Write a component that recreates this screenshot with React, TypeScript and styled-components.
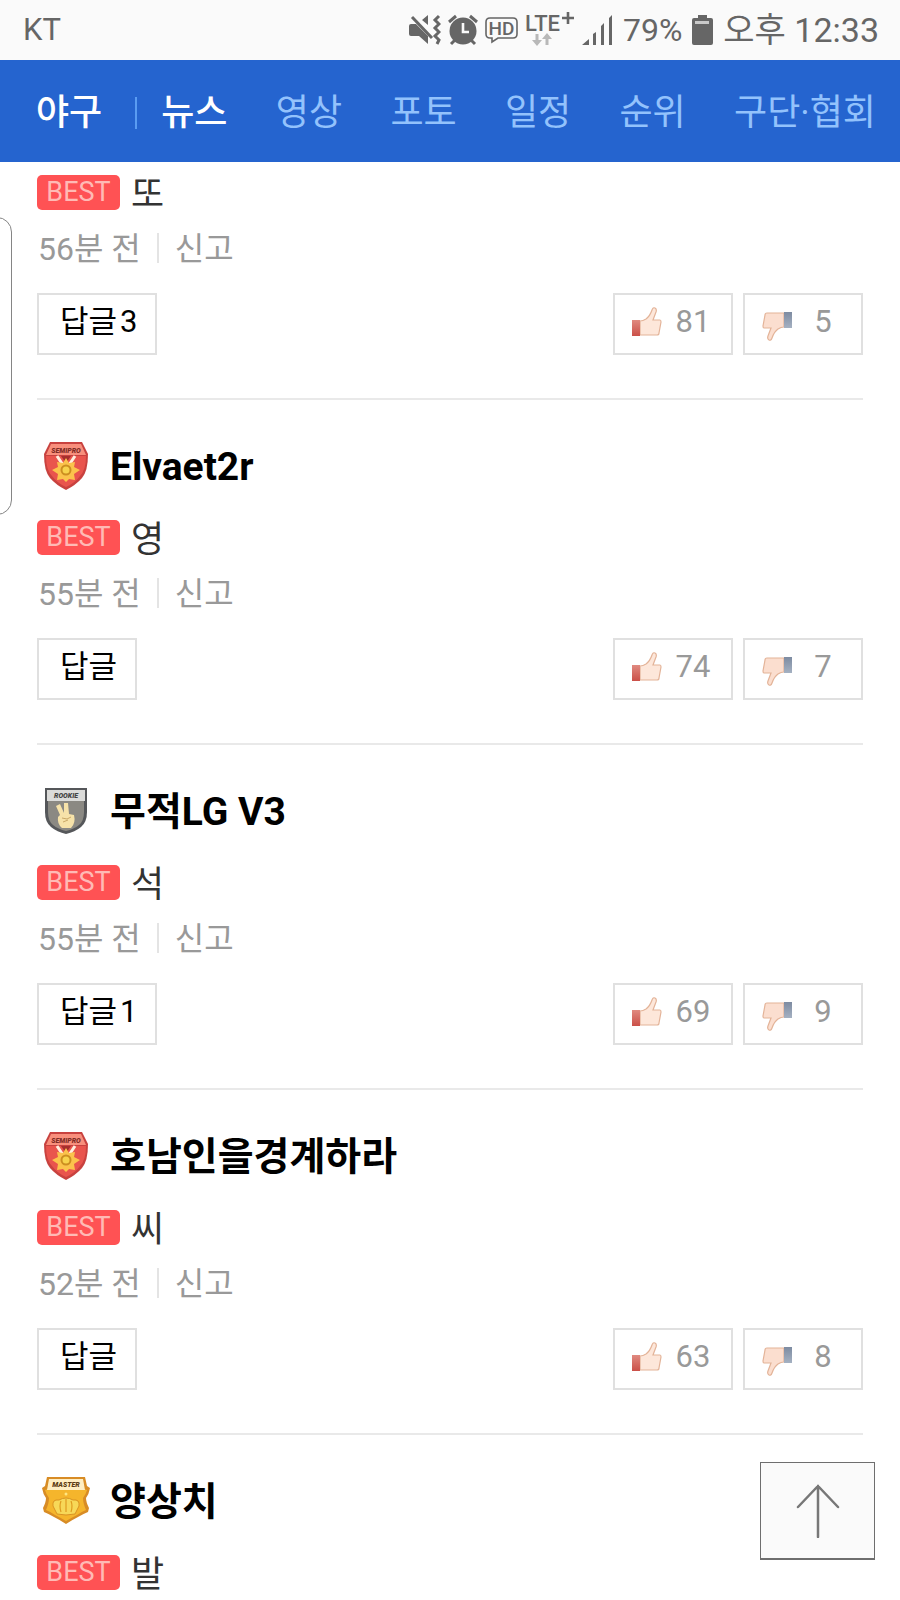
import React from "react";
import styled, { createGlobalStyle } from "styled-components";

const GlobalStyle = createGlobalStyle`
  *, *::before, *::after { box-sizing: border-box; }
  body {
    margin: 0;
    background: #fff;
    color: #333;
    font-family: Roboto, "Noto Sans CJK KR", sans-serif;
  }
  button { font: inherit; cursor: pointer; }
  a { color: inherit; text-decoration: none; }
  svg { display: block; flex: none; }
`;

const Page = styled.div`
  position: relative;
  min-height: 100vh;
  overflow: hidden;
`;

const StatusBar = styled.header`
  display: flex;
  align-items: center;
  gap: 10px;
  height: 60px;
  padding: 0 21px 0 23px;
  background: #fafafa;
  color: #666;
  font-size: 34px;
  line-height: 40px;
  white-space: nowrap;
`;

const Carrier = styled.span`
  flex: 1;
  font-size: 31px;
`;

const BatteryLevel = styled.span`
  font-size: 32px;
`;

const StatusIcons = styled.div`
  display: flex;
  align-items: center;
  gap: 7px;
`;

const Nav = styled.nav`
  display: flex;
  align-items: center;
  height: 102px;
  padding: 4px 24px 0 36px;
  background: #2564cf;
  font-size: 36px;
  line-height: 44px;
  white-space: nowrap;
`;

const Section = styled.a`
  color: #fff;
  font-weight: 500;
`;

const NavRule = styled.span`
  width: 2px;
  height: 32px;
  margin: 0 24px 0 33px;
  background: #5a9cf2;
`;

const Menu = styled.div`
  display: flex;
  flex: 1;
  justify-content: space-between;
`;

const MenuLink = styled.a<{ $active?: boolean }>`
  color: ${(p) => (p.$active ? "#fff" : "#93c2fc")};
  font-weight: ${(p) => (p.$active ? 500 : 400)};
`;

const List = styled.main`
  padding: 0 37px 0 37px;
`;

const Comment = styled.article<{ $cut?: boolean }>`
  padding: ${(p) => (p.$cut ? 13 : 42)}px 0 43px;
  border-bottom: 2px solid #e9e9e9;
  &:last-child {
    padding-bottom: 0;
    border-bottom: 0;
  }
`;

const Head = styled.div`
  display: flex;
  align-items: center;
  gap: 20px;
  height: 48px;
  margin-bottom: 30px;
  padding-left: 5px;
`;

const Name = styled.h2`
  margin: 0;
  padding-top: 2px;
  color: #000;
  font-size: 39px;
  font-weight: 700;
  line-height: 48px;
`;

const Body = styled.p`
  display: flex;
  align-items: flex-start;
  gap: 11px;
  height: 36px;
  margin: 0;
  font-size: 36px;
  line-height: 40px;
`;

const Best = styled.span`
  width: 83px;
  border-radius: 5px;
  background: #ff5254;
  color: #ffbab5;
  font-size: 27px;
  font-weight: 400;
  line-height: 35px;
  text-align: center;
`;

const Meta = styled.div`
  display: flex;
  align-items: center;
  gap: 16px;
  height: 32px;
  margin: 21px 0 29px;
  padding-left: 1px;
  color: #999;
  font-size: 32px;
  line-height: 32px;
`;

const MetaText = styled.time`
  padding-top: 2px;
`;

const MetaRule = styled.span`
  width: 2px;
  height: 30px;
  background: #e4e4e4;
`;

const Report = styled.button`
  padding: 2px 0 0;
  border: 0;
  background: none;
  color: inherit;
`;

const Actions = styled.div`
  display: flex;
  gap: 10px;
`;

const OutlineButton = styled.button`
  height: 62px;
  border: 2px solid #e0e0e0;
  background: #fff;
  font-size: 31px;
  line-height: 40px;
`;

const Reply = styled(OutlineButton)`
  display: flex;
  align-items: center;
  gap: 3px;
  margin-right: auto;
  padding: 0 18px 4px 21px;
  color: #000;
`;

const Vote = styled(OutlineButton)`
  display: flex;
  align-items: center;
  width: 120px;
  padding: 0 7px 0 17px;
  color: #999;
`;

const Count = styled.span`
  flex: 1;
  padding-bottom: 4px;
  text-align: center;
`;

const EdgeHandle = styled.div`
  position: absolute;
  top: 217px;
  left: -20px;
  width: 32px;
  height: 298px;
  border: 1px solid #858585;
  border-radius: 15px;
  background: #fff;
`;

const TopButton = styled.button`
  position: fixed;
  right: 25px;
  bottom: 40px;
  display: flex;
  align-items: center;
  justify-content: center;
  width: 115px;
  height: 98px;
  padding: 0;
  border: 1px solid #6e6e6e;
  border-bottom-width: 2px;
  background: #fafafa;
`;

const MuteIcon = () => (
  <svg width="32" height="32" viewBox="0 0 32 32" aria-label="음소거">
    <path d="M2 10h5l12 12v8l-9-8H2q-2 0-2-2v-8q0-2 2-2Z M13 6l6-5v10Z" fill="#666" />
    <path d="M3 3 23 24" stroke="#666" strokeWidth="3" />
    <path d="m30 2-4 4 4 4-4 4 4 4-4 4 4 4-2 4" fill="none" stroke="#666" strokeWidth="3" />
  </svg>
);

const AlarmIcon = () => (
  <svg width="30" height="32" viewBox="0 0 30 32" aria-label="알람">
    <circle cx="15" cy="17" r="13.5" fill="#666" />
    <path d="m1 8 7-6M29 8l-7-6M7 26l-4 4M23 26l4 4" stroke="#666" strokeWidth="3" />
    <path d="M15 9v9h6" fill="none" stroke="#fafafa" strokeWidth="2.6" />
  </svg>
);

const HdIcon = () => (
  <svg width="33" height="32" viewBox="0 0 33 32" aria-label="HD">
    <path
      d="M5 4h23q4 0 4 4v12q0 4-4 4H13l-6 4v-4H5q-4 0-4-4V8q0-4 4-4Z"
      fill="none"
      stroke="#666"
      strokeWidth="1.6"
    />
    <text x="16.5" y="21" textAnchor="middle" fontFamily="Roboto" fontSize="19" fontWeight="500" fill="#666">
      HD
    </text>
  </svg>
);

const LteIcon = () => (
  <svg width="50" height="36" viewBox="0 0 50 36" aria-label="LTE+">
    <text x="0" y="19" fontFamily="Roboto" fontSize="22" fontWeight="500" fill="#666">
      LTE
    </text>
    <path d="M43 0v12M37 6h12" stroke="#666" strokeWidth="2.6" />
    <path d="M12 22v7M22 33v-7" stroke="#b8b8b8" strokeWidth="3" />
    <path d="M7 28h10l-5 6ZM17 27h10l-5-6Z" fill="#b8b8b8" />
  </svg>
);

const SignalIcon = () => (
  <svg width="31" height="32" viewBox="0 0 31 32" aria-label="신호 세기">
    <path d="M0 31l7-6v6ZM11 20l3-2v13h-3ZM19 12l3-3v22h-3ZM27 4l3-3v30h-3Z" fill="#666" />
  </svg>
);

const BatteryIcon = () => (
  <svg width="21" height="32" viewBox="0 0 21 32" aria-label="배터리">
    <path d="M6 1h9v3h4q2 0 2 2v23q0 2-2 2H2q-2 0-2-2V6q0-2 2-2h4Z" fill="#666" />
    <path d="M3 7h14v3H3Z" fill="#c9c9c9" />
  </svg>
);

type Tier = "semipro" | "rookie" | "master";

const TierLabel = ({ y, color, children }: { y: number; color: string; children: string }) => (
  <text
    x="24"
    y={y}
    textAnchor="middle"
    fontFamily="Roboto"
    fontSize="7"
    fontWeight="900"
    fontStyle="italic"
    fill={color}
  >
    {children}
  </text>
);

const TierBadge = ({ tier }: { tier: Tier }) => {
  if (tier === "rookie") {
    return (
      <svg width="48" height="48" viewBox="0 0 48 48" aria-label="ROOKIE">
        <path d="M3 1h42v24q0 10-6 15-6 5-15 7-9-2-15-7-6-5-6-15Z" fill="#55575a" />
        <path d="M6 13h36v12q0 9-5 13-5 4-13 6-8-2-13-6-5-4-5-13Z" fill="#8b8983" />
        <path d="M5 3h38v11H5Z" fill="#dbdbd9" />
        <TierLabel y={11} color="#444">ROOKIE</TierLabel>
        <path
          d="m14 19 4-2 4 9V16h4l1 11 5 1q2 8-3 13h-9q-5-4-4-11l2-2Z"
          fill="#f6e2a9"
        />
        <path d="m20 31 5 1 4-2M21 35l5-2" fill="none" stroke="#c9a868" strokeWidth="1" />
      </svg>
    );
  }
  if (tier === "master") {
    return (
      <svg width="48" height="48" viewBox="0 0 48 48" aria-label="MASTER">
        <path
          d="M5 0h38l2 9 3 2q-1 6-4 10 0 4 3 10l-1 4q-5 2-10 5-6 3-12 7-6-4-12-7-5-3-10-5l-1-4q3-6 3-10-3-4-4-10l3-2Z"
          fill="#d88c25"
        />
        <path
          d="M6 12h36l3 1q-1 4-4 8 0 5 3 12-5 2-9 5-6 3-11 6-5-3-11-6-4-3-9-5 3-7 3-12-3-4-4-8Z"
          fill="#f5b52c"
        />
        <path d="M7 2h34l2 11H5Z" fill="#ffeec2" />
        <TierLabel y={10} color="#5b3b12">MASTER</TierLabel>
        <path
          d="m15 37-4-8q-1-7 6-6 7-4 14 0 7-1 6 6l-4 8q-9 2-18 0Z"
          fill="#f7d858"
          stroke="#d99323"
          strokeWidth="1"
        />
        <path d="M19 24q-2 5 0 11M24 22v13M29 24q2 5 0 11" fill="none" stroke="#df9c20" strokeWidth="1.2" />
        <circle cx="24" cy="17" r="1.5" fill="#ffe681" />
      </svg>
    );
  }
  return (
    <svg width="48" height="48" viewBox="0 0 48 48" aria-label="SEMIPRO">
      <path d="M8 0h32l6 12q0 17-6 24-6 7-16 12Q14 43 8 36 2 29 2 12Z" fill="#c8423f" />
      <path d="M4 14h40q0 14-6 20-5 7-14 11Q15 41 10 34 4 28 4 14Z" fill="#e9544d" />
      <path d="M9 2h30l5 11H4Z" fill="#f88f7c" />
      <TierLabel y={11} color="#812c25">SEMIPRO</TierLabel>
      <path d="m15 14 6 9M33 14l-6 9" stroke="#fff0df" strokeWidth="3" />
      <path d="m19 14 5 7 5-7Z" fill="#a52f2d" />
      <path
        d="m24 16 3 5 6-1-1 5 6 3-6 4 1 6-6-1-3 3-3-3-6 1 1-6-6-4 6-3-1-5 6 1Z"
        fill="#fbc34c"
      />
      <circle cx="24" cy="28" r="4.5" fill="#f7d34d" stroke="#cc8f21" strokeWidth="2" />
    </svg>
  );
};

const HAND = "M8 14q3 0 6-2 4-3 6-9 1-3 3-2 2 1 1 4l-3 8h7q1 0 1 2l-2 11q0 2-2 2H8Z";

const ThumbUp = () => (
  <svg width="30" height="34" viewBox="0 0 30 34" aria-hidden="true">
    <defs>
      <linearGradient id="cuffRed" x1="0" y1="0" x2="0" y2="1">
        <stop offset="0" stopColor="#e08a80" />
        <stop offset="1" stopColor="#cb5048" />
      </linearGradient>
    </defs>
    <path d={HAND} fill="#fde7da" stroke="#e3b398" strokeWidth="1.2" />
    <path d="M0 13h8v16H0Z" fill="url(#cuffRed)" />
  </svg>
);

const ThumbDown = () => (
  <svg width="30" height="34" viewBox="0 0 30 34" aria-hidden="true">
    <defs>
      <linearGradient id="cuffBlue" x1="0" y1="0" x2="0" y2="1">
        <stop offset="0" stopColor="#a5b1c2" />
        <stop offset="1" stopColor="#7d8ba1" />
      </linearGradient>
    </defs>
    <g transform="rotate(180 15 17)">
      <path d={HAND} fill="#fbdecf" stroke="#e3b398" strokeWidth="1.2" />
      <path d="M0 13h8v16H0Z" fill="url(#cuffBlue)" />
    </g>
  </svg>
);

interface CommentData {
  tier?: Tier;
  name?: string;
  text: string;
  age?: string;
  replies?: number;
  up?: number;
  down?: number;
}

const comments: CommentData[] = [
  { text: "또", age: "56분 전", replies: 3, up: 81, down: 5 },
  { tier: "semipro", name: "Elvaet2r", text: "영", age: "55분 전", up: 74, down: 7 },
  { tier: "rookie", name: "무적LG V3", text: "석", age: "55분 전", replies: 1, up: 69, down: 9 },
  { tier: "semipro", name: "호남인을경계하라", text: "씨", age: "52분 전", up: 63, down: 8 },
  { tier: "master", name: "양상치", text: "발" },
];

const menu = ["뉴스", "영상", "포토", "일정", "순위", "구단·협회"];

const CommentItem = ({ tier, name, text, age, replies, up, down }: CommentData) => (
  <Comment $cut={!name}>
    {tier && (
      <Head>
        <TierBadge tier={tier} />
        <Name>{name}</Name>
      </Head>
    )}
    <Body>
      <Best>BEST</Best>
      <span>{text}</span>
    </Body>
    {age && (
      <>
        <Meta>
          <MetaText>{age}</MetaText>
          <MetaRule />
          <Report type="button">신고</Report>
        </Meta>
        <Actions>
          <Reply type="button">
            <span>답글</span>
            {replies && <span>{replies}</span>}
          </Reply>
          <Vote type="button" aria-label={`공감 ${up}`}>
            <ThumbUp />
            <Count>{up}</Count>
          </Vote>
          <Vote type="button" aria-label={`비공감 ${down}`}>
            <ThumbDown />
            <Count>{down}</Count>
          </Vote>
        </Actions>
      </>
    )}
  </Comment>
);

export default function App() {
  return (
    <Page>
      <GlobalStyle />
      <StatusBar>
        <Carrier>KT</Carrier>
        <StatusIcons>
          <MuteIcon />
          <AlarmIcon />
          <HdIcon />
          <LteIcon />
          <SignalIcon />
        </StatusIcons>
        <BatteryLevel>79%</BatteryLevel>
        <BatteryIcon />
        <time>오후 12:33</time>
      </StatusBar>
      <Nav>
        <Section href="#baseball">야구</Section>
        <NavRule />
        <Menu>
          {menu.map((label, i) => (
            <MenuLink key={label} href={`#menu-${i}`} $active={i === 0}>
              {label}
            </MenuLink>
          ))}
        </Menu>
      </Nav>
      <List>
        {comments.map((c) => (
          <CommentItem key={c.text} {...c} />
        ))}
      </List>
      <EdgeHandle />
      <TopButton type="button" aria-label="맨 위로">
        <svg width="44" height="54" viewBox="0 0 44 54" fill="none" stroke="#777" strokeWidth="2.5">
          <path d="M22 53V2M2 23 22 2l20 21" strokeLinecap="round" />
        </svg>
      </TopButton>
    </Page>
  );
}
